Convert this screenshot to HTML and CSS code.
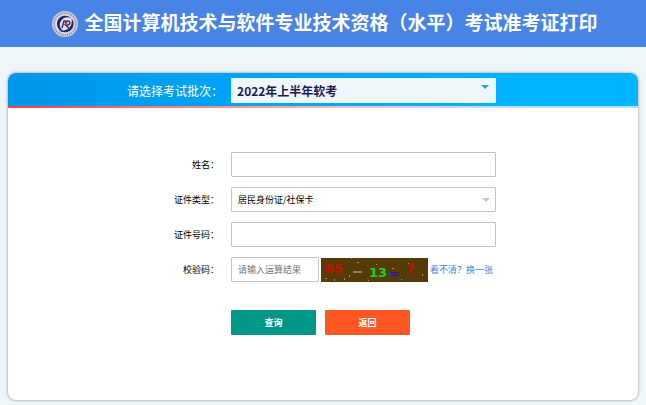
FILE: index.html
```html
<!DOCTYPE html>
<html lang="zh-CN">
<head>
    <meta charset="UTF-8">
    <meta name="viewport" content="width=device-width, initial-scale=1.0">
    <title>准考证打印</title>
    <link rel="stylesheet" href="styles.css">
</head>
<body>
    <header class="header">
        <svg class="logo" viewBox="0 0 52 52" aria-hidden="true">
            <circle cx="26" cy="26" r="26" fill="#c9cfdf"/>
            <circle cx="26" cy="26" r="22" fill="none" stroke="#8d93ad" stroke-width="4" stroke-dasharray="2 2"/>
            <circle cx="26" cy="26" r="19" fill="#dfe2ec"/>
            <path d="M39 15C31 6 15 9 11 20c-4 11 4 21 14 22-9-5-12-15-7-22 4-7 13-10 21-5z" fill="#242a5c"/>
            <path d="M13 38c9 8 25 5 29-6 3-8 0-14-3-17 2 9-1 17-8 21-6 4-12 4-18 2z" fill="#242a5c"/>
            <path d="M20 34l4-14h8c5 0 5 7 0 8h-5l9 8" fill="none" stroke="#353b6b" stroke-width="3"/>
            <circle cx="28" cy="23" r="3" fill="#c92b45"/>
        </svg>
        <h1>全国计算机技术与软件专业技术资格（水平）考试准考证打印</h1>
    </header>

    <main class="card">
        <form>
            <div class="batch-bar row">
                <label for="batch">请选择考试批次：</label>
                <div class="select-box">
                    <select id="batch">
                        <option>2022年上半年软考</option>
                    </select>
                </div>
            </div>

            <div class="fields">
                <div class="row">
                    <label for="name">姓名：</label>
                    <input type="text" id="name">
                </div>
                <div class="row">
                    <label for="id-type">证件类型：</label>
                    <div class="select-box">
                        <select id="id-type">
                            <option>居民身份证/社保卡</option>
                        </select>
                    </div>
                </div>
                <div class="row">
                    <label for="id-number">证件号码：</label>
                    <input type="text" id="id-number">
                </div>
                <div class="row">
                    <label for="code">校验码：</label>
                    <div class="captcha">
                        <input type="text" id="code" placeholder="请输入运算结果">
                        <svg class="captcha-img" viewBox="0 0 107 24" role="img" aria-label="验证码">
                            <rect width="107" height="24" fill="#553b08"/>
                            <g fill="#a08f70">
                                <rect x="30" y="0" width="1" height="1"/>
                                <rect x="36" y="4" width="2" height="1"/>
                                <rect x="55" y="6" width="1" height="1"/>
                                <rect x="71" y="10" width="2" height="1"/>
                                <rect x="4" y="20" width="2" height="1"/>
                                <rect x="13" y="21" width="1" height="2"/>
                                <rect x="23" y="20" width="1" height="2"/>
                                <rect x="28" y="17" width="1" height="2"/>
                                <rect x="47" y="22" width="1" height="1"/>
                                <rect x="80" y="21" width="1" height="1"/>
                                <rect x="87" y="5" width="1" height="1"/>
                                <rect x="101" y="16" width="1" height="2"/>
                            </g>
                            <text x="4" y="15" fill="#c90d05">65</text>
                            <rect x="32" y="13" width="9" height="2" fill="#8c8468"/>
                            <text x="48" y="19" fill="#10d80c">13</text>
                            <text x="68" y="20" fill="#1c16c0">=</text>
                            <text x="86" y="15" fill="#c90d05">?</text>
                        </svg>
                        <a href="#">看不清？换一张</a>
                    </div>
                </div>
                <div class="row">
                    <div class="actions">
                        <button type="submit" class="btn btn-query">查询</button>
                        <button type="button" class="btn btn-back">返回</button>
                    </div>
                </div>
            </div>
        </form>
    </main>
</body>
</html>
```
FILE: styles.css
```css
* {
    box-sizing: border-box;
}
body {
    margin: 0;
    background-color: #eef6f9;
    color: #000;
    font-family: "Noto Sans CJK SC", sans-serif;
    font-size: 9px;
}
input,
select,
button {
    font-family: inherit;
    font-size: inherit;
    color: inherit;
}
.header {
    display: flex;
    align-items: center;
    justify-content: center;
    gap: 6px;
    height: 47px;
    padding-left: 4px;
    background-color: #4884e5;
    color: #fff;
}
.logo {
    width: 26px;
    height: 26px;
    flex-shrink: 0;
}
h1 {
    margin: 0;
    padding-bottom: 4px;
    font-size: 19px;
    line-height: 28px;
    white-space: nowrap;
}
.card {
    margin: 26px 8px 5px;
    padding-bottom: 65px;
    background-color: #fff;
    border-radius: 8px;
    box-shadow: 0 0 3px #888;
    overflow: hidden;
}
.row {
    display: grid;
    grid-template-columns: 11fr 265px 7fr;
    align-items: center;
}
.row label {
    padding-right: 12px;
    text-align: right;
}

/* batch selector */
.batch-bar {
    position: relative;
    height: 35px;
    padding-bottom: 1px;
    background: linear-gradient(to right, #0096ea, #00b3ff 75%);
    color: #fff;
    font-size: 12px;
}
.batch-bar::after {
    content: "";
    position: absolute;
    left: 0;
    right: 0;
    bottom: 0;
    height: 2px;
    background: linear-gradient(to right, #ff3d4a, #f5c3cb 55%, #b5e2f7 85%);
}
.batch-bar label {
    padding-right: 8px;
}
.batch-bar select {
    background-color: #eef7f9;
    border: none;
    border-radius: 1px;
    color: #1f1a50;
    font-weight: bold;
}

/* form fields */
.fields {
    display: grid;
    gap: 10px;
    padding-top: 44px;
}
.fields input,
.select-box select {
    display: block;
    width: 100%;
    height: 25px;
    padding: 0 6px;
    border-radius: 1px;
    outline: none;
}
.fields input,
.fields select {
    background-color: #fff;
    border: 1px solid #c4c4c4;
}
.select-box {
    position: relative;
}
.select-box select {
    appearance: none;
}
.select-box::after {
    content: "";
    position: absolute;
    top: 11px;
    right: 6px;
    border: 4px solid transparent;
    border-top-color: #c2c2c2;
    border-bottom: none;
    pointer-events: none;
}
.batch-bar .select-box::after {
    top: 7px;
    right: 7px;
    border-top-color: #1ea5ea;
}
.captcha {
    display: flex;
    align-items: center;
    gap: 2px;
    white-space: nowrap;
}
.captcha input {
    width: 88px;
}
.captcha input::placeholder {
    color: #757575;
}
.captcha-img {
    width: 107px;
    height: 24px;
    flex-shrink: 0;
    font: bold 13px "DejaVu Sans", sans-serif;
}
.captcha a {
    color: #4884e5;
    text-decoration: none;
}
.actions {
    grid-column: 2;
    display: flex;
    gap: 9px;
    padding-top: 18px;
}
.btn {
    width: 85px;
    height: 25px;
    padding: 0;
    border: none;
    border-radius: 1px;
    color: #fff;
    font-weight: bold;
    cursor: pointer;
}
.btn-query {
    background-color: #009688;
}
.btn-back {
    background-color: #ff5722;
}
```
